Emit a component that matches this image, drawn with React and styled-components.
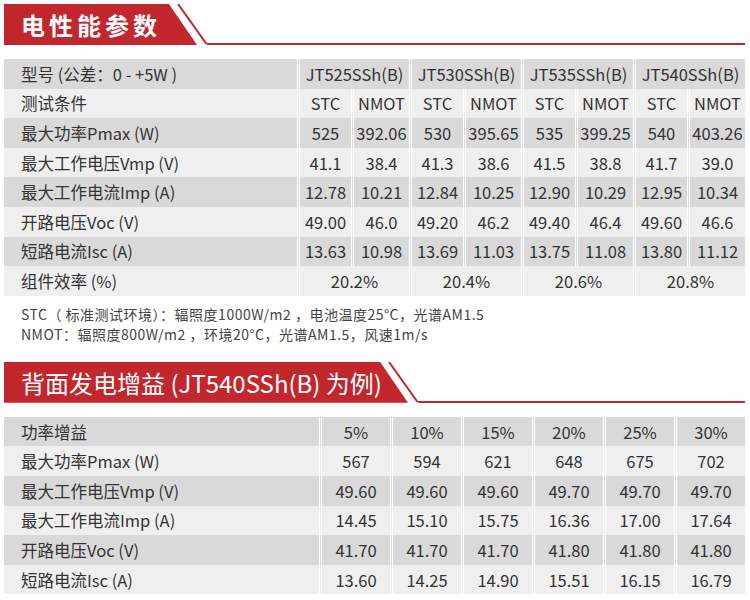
import React from 'react';
import styled, { createGlobalStyle } from 'styled-components';

const RED = '#c1272d';

const GlobalStyle = createGlobalStyle`
  body {
    margin: 0;
    background: #fff;
    font-family: "Noto Sans CJK SC", "Noto Sans", sans-serif;
    color: #333;
  }
`;

const Page = styled.div`
  width: 750px;
  box-sizing: border-box;
  padding: 4px 5px 0 4px;
`;

const Banner = styled.div`
  display: flex;
  height: 41px;
  margin-bottom: 14px;
`;

const TitleBlock = styled.h2`
  margin: 0;
  flex: none;
  width: ${p => p.$w}px;
  box-sizing: border-box;
  padding-left: 17px;
  background: ${RED};
  clip-path: polygon(0 0, calc(100% - 28px) 0, 100% 100%, 0 100%);
  color: #fff;
  font-size: 24px;
  font-weight: ${p => (p.$bold ? 700 : 400)};
  letter-spacing: ${p => p.$spacing || 0}px;
  line-height: 41px;
  white-space: nowrap;
`;

const Slash = styled.svg`
  flex: none;
  margin-left: -20px;
  width: 30px;
  height: 41px;
`;

const Rule = styled.div`
  flex: 1;
  border-bottom: 2px solid ${RED};
`;

const Table = styled.table`
  width: 100%;
  border-collapse: separate;
  border-spacing: 0;
  table-layout: fixed;
  font-size: 16.5px;
  line-height: 20px;

  tr {
    height: 29.6px;
    background: #efefef;
  }
  tr:nth-child(odd) {
    background: #d9d9d9;
  }
`;

const Label = styled.th`
  text-align: left;
  font-weight: 400;
  padding: 0 0 0 17px;
  white-space: nowrap;
`;

const Cell = styled.td`
  text-align: center;
  padding: 0;
  border-left: 3px double #fff;
  white-space: nowrap;
`;

const Notes = styled.div`
  margin: 8px 0 18px;
  padding-left: 17px;
  font-size: 14px;
  line-height: 20px;
  letter-spacing: 0.5px;
  color: #444;
`;

const SectionTitle = ({ w, bold, spacing, children }) => (
  <Banner>
    <TitleBlock $w={w} $bold={bold} $spacing={spacing}>{children}</TitleBlock>
    <Slash viewBox="0 0 30 41">
      <line x1="1" y1="0" x2="29.5" y2="40" stroke={RED} strokeWidth="2" />
    </Slash>
    <Rule />
  </Banner>
);

const models = ['JT525SSh(B)', 'JT530SSh(B)', 'JT535SSh(B)', 'JT540SSh(B)'];

const elecRows = [
  ['最大功率Pmax (W)', ['525', '392.06', '530', '395.65', '535', '399.25', '540', '403.26']],
  ['最大工作电压Vmp (V)', ['41.1', '38.4', '41.3', '38.6', '41.5', '38.8', '41.7', '39.0']],
  ['最大工作电流Imp (A)', ['12.78', '10.21', '12.84', '10.25', '12.90', '10.29', '12.95', '10.34']],
  ['开路电压Voc (V)', ['49.00', '46.0', '49.20', '46.2', '49.40', '46.4', '49.60', '46.6']],
  ['短路电流Isc (A)', ['13.63', '10.98', '13.69', '11.03', '13.75', '11.08', '13.80', '11.12']],
];

const efficiency = ['20.2%', '20.4%', '20.6%', '20.8%'];

const gains = ['5%', '10%', '15%', '20%', '25%', '30%'];

const gainRows = [
  ['最大功率Pmax (W)', ['567', '594', '621', '648', '675', '702']],
  ['最大工作电压Vmp (V)', ['49.60', '49.60', '49.60', '49.70', '49.70', '49.70']],
  ['最大工作电流Imp (A)', ['14.45', '15.10', '15.75', '16.36', '17.00', '17.64']],
  ['开路电压Voc (V)', ['41.70', '41.70', '41.70', '41.80', '41.80', '41.80']],
  ['短路电流Isc (A)', ['13.60', '14.25', '14.90', '15.51', '16.15', '16.79']],
];

export default function App() {
  return (
    <Page>
      <GlobalStyle />
      <SectionTitle w={193} bold spacing={4}>电性能参数</SectionTitle>

      <Table>
        <colgroup>
          <col />
          {models.map(m => (
            <React.Fragment key={m}>
              <col style={{ width: 54 }} />
              <col style={{ width: 58 }} />
            </React.Fragment>
          ))}
        </colgroup>
        <tbody>
          <tr>
            <Label>型号 (公差：0 - +5W )</Label>
            {models.map(m => <Cell key={m} colSpan={2}>{m}</Cell>)}
          </tr>
          <tr>
            <Label>测试条件</Label>
            {models.map(m => (
              <React.Fragment key={m}>
                <Cell>STC</Cell>
                <Cell>NMOT</Cell>
              </React.Fragment>
            ))}
          </tr>
          {elecRows.map(([label, values]) => (
            <tr key={label}>
              <Label>{label}</Label>
              {values.map((v, i) => <Cell key={i}>{v}</Cell>)}
            </tr>
          ))}
          <tr>
            <Label>组件效率 (%)</Label>
            {efficiency.map(e => <Cell key={e} colSpan={2}>{e}</Cell>)}
          </tr>
        </tbody>
      </Table>

      <Notes>
        <div>STC（ 标准测试环境）：辐照度1000W/m2 ，电池温度25°C，光谱AM1.5</div>
        <div>NMOT：辐照度800W/m2 ，环境20°C，光谱AM1.5，风速1m/s</div>
      </Notes>

      <SectionTitle w={404}>背面发电增益 (JT540SSh(B) 为例)</SectionTitle>

      <Table>
        <colgroup>
          <col />
          {gains.map(g => <col key={g} style={{ width: 71 }} />)}
        </colgroup>
        <tbody>
          <tr>
            <Label>功率增益</Label>
            {gains.map(g => <Cell key={g}>{g}</Cell>)}
          </tr>
          {gainRows.map(([label, values]) => (
            <tr key={label}>
              <Label>{label}</Label>
              {values.map((v, i) => <Cell key={i}>{v}</Cell>)}
            </tr>
          ))}
        </tbody>
      </Table>
    </Page>
  );
}
